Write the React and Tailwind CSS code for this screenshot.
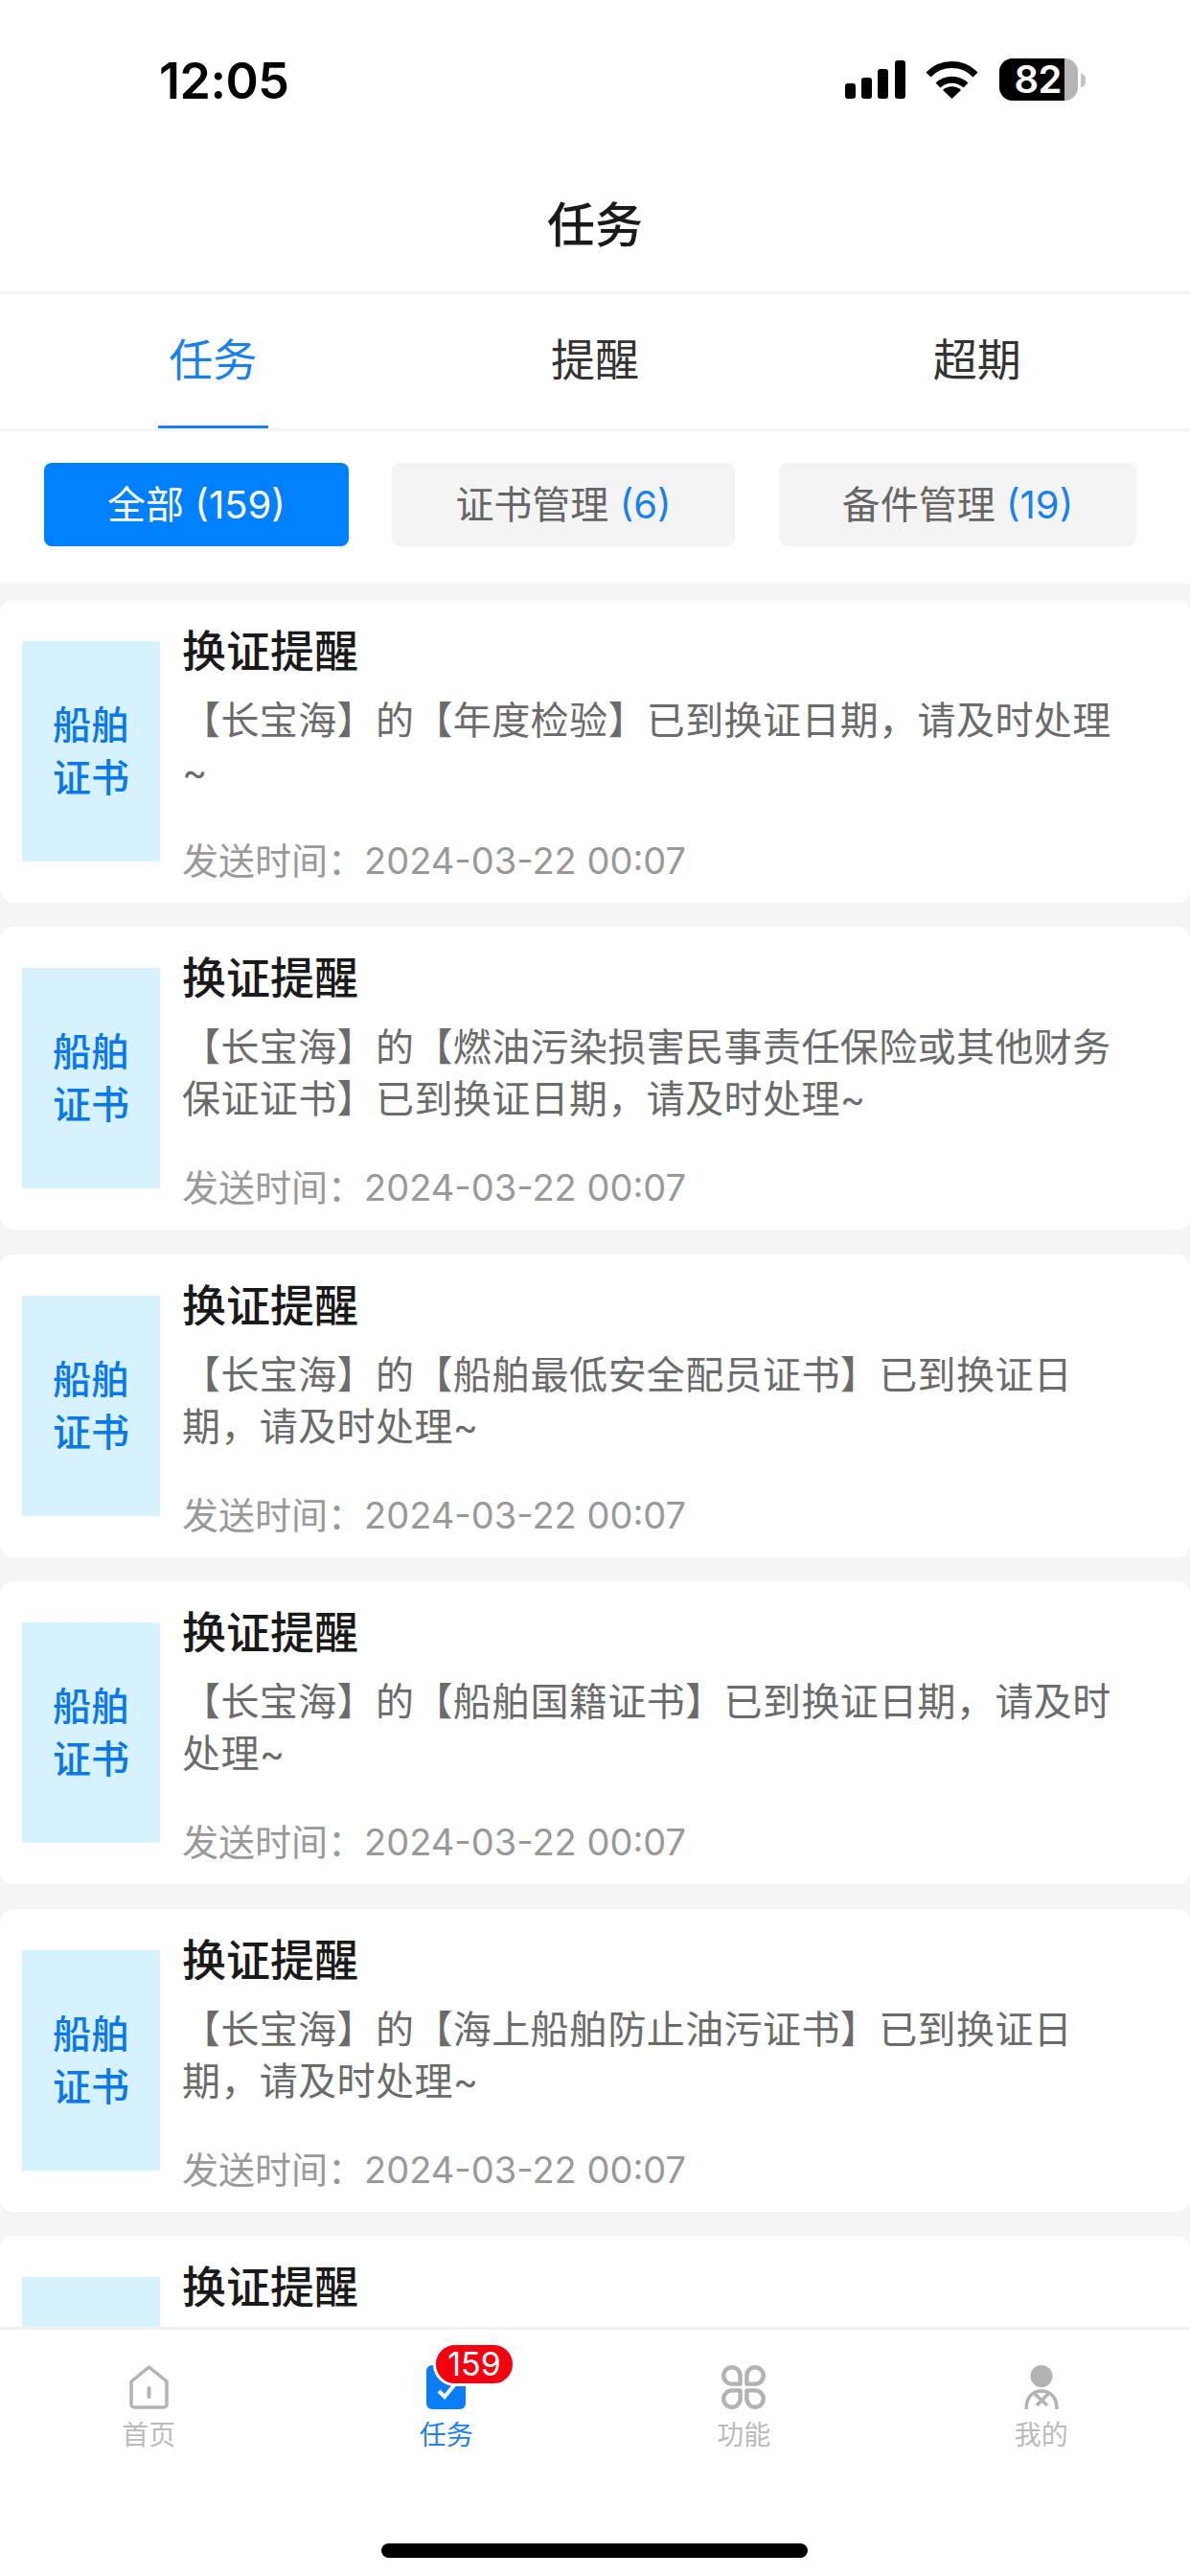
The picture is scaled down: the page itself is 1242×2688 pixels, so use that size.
import React from "react";

const tasks = [
  "【长宝海】的【年度检验】已到换证日期，请及时处理~",
  "【长宝海】的【燃油污染损害民事责任保险或其他财务保证证书】已到换证日期，请及时处理~",
  "【长宝海】的【船舶最低安全配员证书】已到换证日期，请及时处理~",
  "【长宝海】的【船舶国籍证书】已到换证日期，请及时处理~",
  "【长宝海】的【海上船舶防止油污证书】已到换证日期，请及时处理~",
  "【长宝海】的【海上船舶防止油污证书】已到换证日期，请及时处理~",
];

function StatusBar() {
  return (
    <div className="h-[120px] flex items-start justify-between pt-[58px]">
      <span className="ml-[166px] text-[52px] leading-[54px] font-semibold tracking-[-0.5px] text-black">12:05</span>
      <div className="flex items-start mr-[109px] mt-[3px]">
        <svg width="63" height="40" viewBox="0 0 63 40" className="mt-[2px]">
          <rect x="0" y="24" width="11" height="16" rx="3" fill="#000" />
          <rect x="17" y="18" width="11" height="22" rx="3" fill="#000" />
          <rect x="34" y="9" width="11" height="31" rx="3" fill="#000" />
          <rect x="52" y="0" width="11" height="40" rx="3" fill="#000" />
        </svg>
        <svg width="55" height="41" viewBox="0 0 55 41" className="ml-[21px] mt-[1px]">
          <path d="M3 16 A34 34 0 0 1 52 16" fill="none" stroke="#000" strokeWidth="7" />
          <path d="M13 27 A21 21 0 0 1 42 27" fill="none" stroke="#000" strokeWidth="7" />
          <path d="M27.5 41 L18 32 A14 14 0 0 1 37 32 Z" fill="#000" />
        </svg>
        <div className="ml-[22px] w-[82px] h-[44px] rounded-[14px] bg-[#b5b5b5] overflow-hidden">
          <div className="w-[68px] h-[44px] bg-black flex items-center justify-end pr-[3px]">
            <span className="text-[40px] leading-[44px] font-semibold tracking-[-0.5px] text-white">82</span>
          </div>
        </div>
        <div className="ml-[3px] mt-[16px] w-[5px] h-[14px] rounded-r-full bg-[#c4c4c4]" />
      </div>
    </div>
  );
}

function TabBar() {
  return (
    <div className="flex px-[23px] h-[146px] border-t-[3px] border-b-[3px] border-[#f3f3f3]">
      {["任务", "提醒", "超期"].map((t, i) => (
        <div key={t} className="flex-1 flex items-center justify-center relative">
          <span className={`text-[46px] leading-[56px] mb-[5px] ${i === 0 ? "text-[#1a80f0]" : "text-[#333333]"}`}>{t}</span>
          {i === 0 && <div className="absolute bottom-0 w-[115px] h-[3px] bg-[#1a80f0]" />}
        </div>
      ))}
    </div>
  );
}

function Chips() {
  return (
    <div className="flex pl-[46px] pt-[33px] pb-[39px]">
      <div className="w-[318px] h-[87px] rounded-[8px] bg-[#0080ff] text-white text-[40px] flex items-center justify-center">全部 (159)</div>
      <div className="ml-[45px] w-[358px] h-[87px] rounded-[8px] bg-[#f4f4f4] text-[#666666] text-[40px] flex items-center justify-center whitespace-pre">
        证书管理 <span className="text-[#1a80f0]">(6)</span>
      </div>
      <div className="ml-[46px] w-[373px] h-[87px] rounded-[8px] bg-[#f4f4f4] text-[#666666] text-[40px] flex items-center justify-center whitespace-pre">
        备件管理 <span className="text-[#1a80f0]">(19)</span>
      </div>
    </div>
  );
}

function TaskCard({ text }) {
  return (
    <div className="shrink-0 h-[316px] mb-[25.4px] bg-white rounded-[14px] flex items-center pl-[23px]">
      <div className="w-[144px] h-[230px] bg-[#d6f1ff] flex items-center justify-center text-center text-[40px] leading-[55px] font-medium text-[#0a78ea]">
        船舶
        <br />
        证书
      </div>
      <div className="ml-[23px] w-[985px] h-full flex flex-col pt-[26px] pb-[22px]">
        <div className="text-[46px] leading-[54px] font-medium text-[#1a1a1a]">换证提醒</div>
        <div className="mt-[19px] text-[40px] leading-[54px] tracking-[0.4px] text-[#6b6b6b]">{text}</div>
        <div className="mt-auto text-[38px] leading-[44px] text-[#999999]">发送时间：2024-03-22 00:07</div>
      </div>
    </div>
  );
}

function HomeIcon() {
  return (
    <svg width="41" height="46" viewBox="0 0 41 46">
      <path d="M20.5 2 L39 17 V41 a3 3 0 0 1 -3 3 H5 a3 3 0 0 1 -3 -3 V17 Z" fill="none" stroke="#b3b3b3" strokeWidth="3.5" strokeLinejoin="round" />
      <rect x="18.5" y="22" width="4" height="13" rx="2" fill="#b3b3b3" />
    </svg>
  );
}

function TaskIcon() {
  return (
    <svg width="41" height="46" viewBox="0 0 41 46">
      <rect x="0" y="0" width="41" height="46" rx="6" fill="#0a7cf5" />
      <path d="M13 27 L19 33 L29 21" fill="none" stroke="#fff" strokeWidth="4" />
    </svg>
  );
}

function FuncIcon() {
  return (
    <svg width="46" height="46" viewBox="0 0 46 46" fill="none" stroke="#b3b3b3" strokeWidth="4.4" strokeLinejoin="round">
      <path d="M19.6 19.6 H10.9 A8.7 8.7 0 1 1 19.6 10.9 Z" />
      <path d="M26.4 19.6 H35.1 A8.7 8.7 0 1 0 26.4 10.9 Z" />
      <path d="M19.6 26.4 H10.9 A8.7 8.7 0 1 0 19.6 35.1 Z" />
      <path d="M26.4 26.4 H35.1 A8.7 8.7 0 1 1 26.4 35.1 Z" />
    </svg>
  );
}

function MineIcon() {
  return (
    <svg width="36" height="46" viewBox="0 0 36 46" fill="none">
      <ellipse cx="18" cy="11.5" rx="11.5" ry="11.5" fill="#b3b3b3" />
      <path d="M2 46 C2 33 9 27 18 27 C27 27 34 33 34 46" stroke="#b3b3b3" strokeWidth="3.5" />
      <path d="M11 30 L24 42 M25 30 L13 42" stroke="#b3b3b3" strokeWidth="3.5" />
    </svg>
  );
}

function BottomNav() {
  const items = [
    { label: "首页", icon: <HomeIcon /> },
    { label: "任务", icon: <TaskIcon />, active: true },
    { label: "功能", icon: <FuncIcon /> },
    { label: "我的", icon: <MineIcon /> },
  ];
  return (
    <div className="shrink-0 h-[260px] bg-white border-t-[3px] border-[#f0f0f0] relative">
      <div className="flex pt-[37px]">
        {items.map((item) => (
          <div key={item.label} className="flex-1 flex flex-col items-center">
            <div className="relative h-[46px] flex items-center justify-center">
              {item.icon}
              {item.active && (
                <span className="absolute left-[7px] top-[-24px] h-[46px] px-[12px] rounded-full bg-[#f5000f] border-[3px] border-white text-white text-[34px] leading-[40px]">159</span>
              )}
            </div>
            <span className={`mt-[9px] text-[28px] leading-[36px] ${item.active ? "text-[#1a80f0]" : "text-[#bbbbbb]"}`}>{item.label}</span>
          </div>
        ))}
      </div>
      <div className="absolute left-[398px] top-[223px] w-[445px] h-[15px] rounded-full bg-black" />
    </div>
  );
}

export default function App() {
  return (
    <div className="w-[1242px] h-[2688px] flex flex-col bg-[#f5f5f5] overflow-hidden font-['Inter','Noto_Sans_CJK_SC',sans-serif]">
      <div className="bg-white shrink-0">
        <StatusBar />
        <div className="h-[184px] flex items-center justify-center text-[50px] font-medium text-[#1a1a1a] pt-[46px]">任务</div>
        <TabBar />
        <Chips />
      </div>
      <div className="flex-1 min-h-0 overflow-hidden pt-[17px] flex flex-col">
        {tasks.map((t, i) => (
          <TaskCard key={i} text={t} />
        ))}
      </div>
      <BottomNav />
    </div>
  );
}
